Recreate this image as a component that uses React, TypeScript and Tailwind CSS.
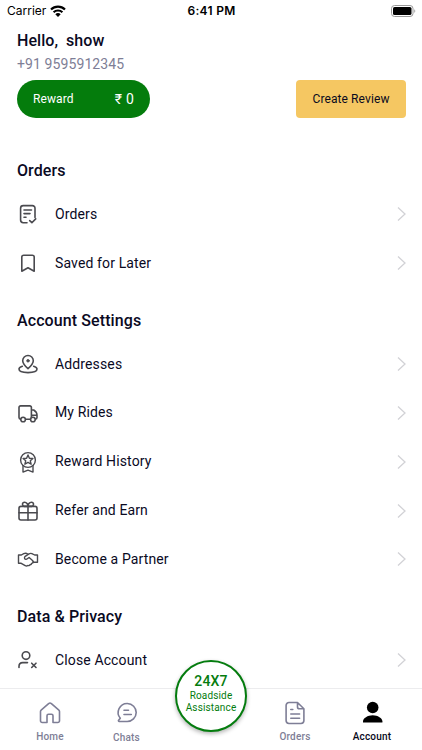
import React from 'react'

type IconProps = { children: React.ReactNode; className?: string }

function Icon({ children, className = 'size-6 text-[#4a4a4f]' }: IconProps) {
  return (
    <svg
      viewBox="0 0 24 24"
      fill="none"
      stroke="currentColor"
      strokeWidth="1.6"
      strokeLinecap="round"
      strokeLinejoin="round"
      className={`shrink-0 ${className}`}
    >
      {children}
    </svg>
  )
}

const icons = {
  orders: (
    <Icon>
      <path d="M11 20.7H7.2a2.6 2.6 0 0 1-2.6-2.6V6.2a2.6 2.6 0 0 1 2.6-2.6h9.2A2.6 2.6 0 0 1 19 6.2v9.2M8 8h7.5M8 11.6h6M8 15.2h2M13.7 18.6l2.2 2.1 3.8-3.8" />
    </Icon>
  ),
  saved: (
    <Icon>
      <path d="M7.6 4.2h8.8a1.8 1.8 0 0 1 1.8 1.8v14.2L12 16.8l-6.2 3.4V6a1.8 1.8 0 0 1 1.8-1.8Z" />
    </Icon>
  ),
  address: (
    <Icon>
      <path d="M12 16.7C9.2 14.2 6.7 11.6 6.7 8.8a5.3 5.3 0 0 1 10.6 0c0 2.8-2.5 5.4-5.3 7.9Z" />
      <circle cx="12" cy="8.8" r="1.3" fill="currentColor" strokeWidth="0.8" />
      <path d="M6.3 14.3c-2 .6-3.3 1.4-3.3 2.7 0 2.2 3.9 3.6 9 3.6s9-1.4 9-3.6c0-1.3-1.3-2.1-3.3-2.7" />
    </Icon>
  ),
  rides: (
    <Icon>
      <path d="M5 18.2h-.4A1.6 1.6 0 0 1 3 16.6V6.5a1.6 1.6 0 0 1 1.6-1.6h9.2a1.6 1.6 0 0 1 1.6 1.6v11.7H9.3M15.4 9h2.3c2 1.2 3.3 3 3.3 5.2v2.4a1.6 1.6 0 0 1-1.6 1.6M15.4 14.2H21" />
      <circle cx="7.1" cy="18.5" r="2.3" fill="white" />
      <circle cx="16.9" cy="18.5" r="2.3" fill="white" />
    </Icon>
  ),
  reward: (
    <Icon>
      <g strokeWidth="1.4">
        <circle cx="12" cy="10" r="7.4" />
        <path d="m12 5 1.4 3.2 3.5.3-2.6 2.3.8 3.4-3.1-1.8-3.1 1.8.8-3.4-2.6-2.3 3.5-.3L12 5ZM7 15.8v6.3l5-1.9 5 1.9v-6.3" />
      </g>
    </Icon>
  ),
  gift: (
    <Icon>
      <rect x="3" y="7.4" width="18" height="13.6" rx="2" />
      <path d="M3 13.8h18M12 7.4V21M12 7.4H8.3c-2.6-.8-2.3-4.2.3-4.2C10.6 3.2 12 5 12 7.4Zm0 0h3.7c2.6-.8 2.3-4.2-.3-4.2C13.4 3.2 12 5 12 7.4Z" />
    </Icon>
  ),
  partner: (
    <Icon>
      <g strokeWidth="1.4">
        <path d="M2.5 8h2.9l2.3-1.3c1.4-.6 2.8-.5 4 .3M2.5 16.2h2.3l4.4 2.5c.9.5 1.9.5 2.6-.2.8.3 1.8.1 2.1-.8.9.1 1.6-.5 1.7-1.3.9-.1 1.6-.7 1.5-1.7M2.5 8v8.2" />
        <path d="M21.5 8h-2.9l-2.7-1.4c-1-.4-2-.3-2.9.2L9.2 9.3c-1 .8-.9 2.4.1 2.9.7.3 1.3.2 2-.4l1.8-1.3 3.7 3.2c.5.5.7 1 .4 1.6l1.9-.1h2.4V8" />
      </g>
    </Icon>
  ),
  close: (
    <Icon>
      <circle cx="10" cy="7.6" r="3.8" />
      <path d="M3 19.5v-1.2c0-2.2 1.7-3.7 3.7-3.7h4.8M15.7 15.2l4.3 4.3M20 15.2l-4.3 4.3" />
    </Icon>
  ),
}

const sections = [
  {
    title: 'Orders',
    rows: [
      { icon: icons.orders, label: 'Orders' },
      { icon: icons.saved, label: 'Saved for Later' },
    ],
  },
  {
    title: 'Account Settings',
    rows: [
      { icon: icons.address, label: 'Addresses' },
      { icon: icons.rides, label: 'My Rides' },
      { icon: icons.reward, label: 'Reward History' },
      { icon: icons.gift, label: 'Refer and Earn' },
      { icon: icons.partner, label: 'Become a Partner' },
    ],
  },
  { title: 'Data & Privacy', rows: [{ icon: icons.close, label: 'Close Account' }] },
]

function StatusBar() {
  return (
    <div className="grid h-[22px] shrink-0 grid-cols-3 items-center pl-[7px] pr-[6px] font-[Inter] text-black">
      <div className="flex items-center gap-1 text-[12px]">
        Carrier
        <svg viewBox="0 0 16 12" className="h-3 w-4" fill="none" stroke="currentColor" strokeWidth="2.2">
          <path d="M1 4.5a10 10 0 0 1 14 0M3.6 7.3a6.3 6.3 0 0 1 8.8 0" />
          <path d="M5.3 9.2a3.9 3.9 0 0 1 5.4 0L8 11.9Z" fill="currentColor" stroke="none" />
        </svg>
      </div>
      <div className="text-center text-[12px] font-semibold tracking-[0.3px]">6:41 PM</div>
      <svg viewBox="0 0 25 12" className="h-3 w-[25px] justify-self-end">
        <rect x=".5" y=".5" width="21.5" height="11" rx="3" fill="none" stroke="#999" />
        <rect x="2" y="2" width="18.5" height="8" rx="1.6" fill="#000" />
        <path d="M23.3 4.2c1.3.5 1.3 3.1 0 3.6Z" fill="#999" />
      </svg>
    </div>
  )
}

function TabBar() {
  return (
    <nav className="relative flex h-[62px] shrink-0 border-t border-[#ececee] bg-white text-[10px] font-medium tracking-[0.2px] text-[#7e7e96]">
      <div className="flex w-[100px] flex-col items-center pt-3">
        <Icon className="size-6">
          <path d="M9 21.5H4.2A1.7 1.7 0 0 1 2.5 19.8V10.6c0-.7.3-1.3.9-1.8l7.2-6.2a2.1 2.1 0 0 1 2.8 0l7.2 6.2c.6.5.9 1.1.9 1.8v9.2a1.7 1.7 0 0 1-1.7 1.7H15v-6.8a1.5 1.5 0 0 0-1.5-1.5h-3A1.5 1.5 0 0 0 9 14.7Z" />
        </Icon>
        <span className="mt-1">Home</span>
      </div>
      <div className="flex w-[53px] flex-col items-center pt-3">
        <Icon className="size-6">
          <path d="M12.3 2.5a9 9 0 1 1-.2 18H4.3a.8.8 0 0 1-.6-1.4l1.6-1.8A9 9 0 0 1 12.3 2.5ZM9 9.3h4.5M9 13.5h7.3" />
        </Icon>
        <span className="mt-[5px]">Chats</span>
      </div>
      <div className="w-[91px]" />
      <div className="flex w-[102px] flex-col items-center pt-3">
        <Icon className="size-6">
          <path d="M14.5 1.5H6A2.9 2.9 0 0 0 3.1 4.4v15.2A2.9 2.9 0 0 0 6 22.5h12a2.9 2.9 0 0 0 2.9-2.9V7.8ZM14.5 1.5v4.4c0 1.1.8 1.9 1.9 1.9h4.5M7.8 8.5h2M7.8 13h8.8M7.8 17.3h8.8" />
        </Icon>
        <span className="mt-1">Orders</span>
      </div>
      <div className="flex w-[52px] flex-col items-center pt-3 text-[#08081a]">
        <svg viewBox="0 0 24 24" className="size-6 fill-black">
          <circle cx="12.7" cy="6.5" r="5.8" />
          <path d="M3 21.5v-1.3c0-3 4.7-6 9.7-6s9.700 3 9.700 6v1.3Z" />
        </svg>
        <span className="mt-1">Account</span>
      </div>

      <div className="absolute -top-[29px] left-[175px] flex size-[72px] flex-col items-center rounded-full border-2 border-[#047c0e] bg-white pt-[10px] text-[#047c0e] shadow-[0_2px_4px_rgba(0,0,0,0.3)]">
        <span className="text-[14px] leading-[18px] tracking-[0.2px]">24X7</span>
        <span className="whitespace-nowrap text-center text-[10px] font-normal leading-3 tracking-[0.15px]">
          Roadside
          <br />
          Assistance
        </span>
      </div>
    </nav>
  )
}

export default function App() {
  return (
    <div className="flex h-[750px] w-[422px] flex-col overflow-hidden bg-white font-[Roboto,sans-serif] text-[#0a0a1f]">
      <StatusBar />

      <header className="h-[116px] shrink-0 px-[17px] pt-[7px]">
        <h1 className="whitespace-pre text-[16px] font-medium leading-6 tracking-[0.05px]">Hello,  show</h1>
        <p className="text-[14px] leading-[22px] tracking-[0.1px] text-[#7e7e96]">+91 9595912345</p>
        <div className="mt-[5px] flex justify-between">
          <div className="flex h-[38px] w-[133px] items-center justify-between rounded-full bg-[#047c0c] px-4 text-white">
            <span className="text-[12px] tracking-[0.1px]">Reward</span>
            <span className="text-[14px] tracking-[0.2px]">₹ 0</span>
          </div>
          <button className="mr-[-1px] h-[38px] w-[110px] rounded-[4px] bg-[#f5c762] text-[12px] tracking-[0.1px] text-[#0a0a1f]">
            Create Review
          </button>
        </div>
      </header>

      <main className="min-h-0 flex-1 overflow-hidden">
        {sections.map((section) => (
          <section key={section.title}>
            <h2 className="h-[52px] px-[17px] pt-[14px] text-[16px] font-medium leading-[38px] tracking-[0.1px]">
              {section.title}
            </h2>
            {section.rows.map((row) => (
              <div key={row.label} className="flex h-[48.85px] items-center px-4">
                {row.icon}
                <span className="ml-[15px] flex-1 text-[14px] tracking-[0.13px]">{row.label}</span>
                <svg viewBox="0 0 9 16" className="h-4 w-[9px]" fill="none" stroke="#d2d2d6" strokeWidth="1.3">
                  <path d="m1 1.5 7 6.5-7 6.5" />
                </svg>
              </div>
            ))}
          </section>
        ))}
      </main>

      <TabBar />
    </div>
  )
}
